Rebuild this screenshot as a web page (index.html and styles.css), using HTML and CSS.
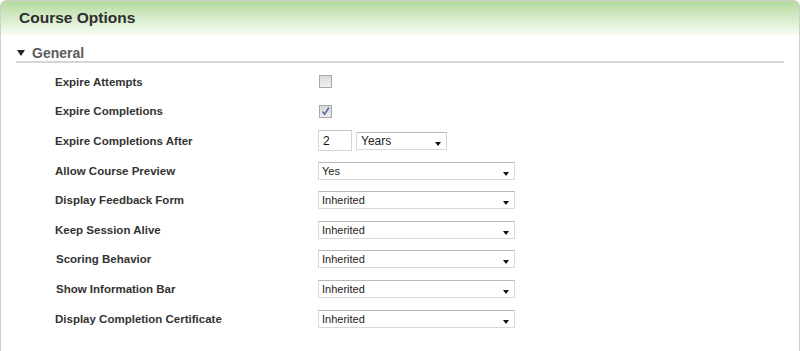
FILE: index.html
```html
<!DOCTYPE html>
<html>
<head>
<meta charset="utf-8">
<link rel="stylesheet" href="styles.css">
</head>
<body>
<div class="panel">
  <div class="panel-header"><h1 class="title">Course Options</h1></div>
  <div class="section">
    <div class="section-head"><span class="caret"></span><span class="section-title">General</span></div>
    <div class="rows">
      <div class="row"><label class="lbl">Expire Attempts</label><div class="ctl"><span class="check"></span></div></div>
      <div class="row"><label class="lbl">Expire Completions</label><div class="ctl"><span class="check on"><svg width="11" height="11" viewBox="0 0 11 11"><path d="M2.5 5.5 L4.6 8.2 L8.8 1.8" fill="none" stroke="#5068a8" stroke-width="1.6"/></svg></span></div></div>
      <div class="row"><label class="lbl">Expire Completions After</label><div class="ctl"><span class="textbox">2</span><span class="select short">Years<span class="arrow"></span></span></div></div>
      <div class="row"><label class="lbl">Allow Course Preview</label><div class="ctl"><span class="select">Yes<span class="arrow"></span></span></div></div>
      <div class="row"><label class="lbl">Display Feedback Form</label><div class="ctl"><span class="select">Inherited<span class="arrow"></span></span></div></div>
      <div class="row"><label class="lbl">Keep Session Alive</label><div class="ctl"><span class="select">Inherited<span class="arrow"></span></span></div></div>
      <div class="row"><label class="lbl shift">Scoring Behavior</label><div class="ctl"><span class="select">Inherited<span class="arrow"></span></span></div></div>
      <div class="row"><label class="lbl shift">Show Information Bar</label><div class="ctl"><span class="select">Inherited<span class="arrow"></span></span></div></div>
      <div class="row"><label class="lbl">Display Completion Certificate</label><div class="ctl"><span class="select">Inherited<span class="arrow"></span></span></div></div>
    </div>
  </div>
</div>
</body>
</html>
```
FILE: styles.css
```css
html, body {
  margin: 0;
  padding: 0;
  background: #ffffff;
}
body {
  font-family: "Liberation Sans", Arial, sans-serif;
  color: #333;
}
.panel {
  width: 800px;
  height: 100vh;
  box-sizing: border-box;
  border: 1px solid #cfcfcf;
  border-bottom: none;
  border-radius: 6px 6px 0 0;
  background: #fff;
  overflow: hidden;
}
.panel-header {
  height: 34px;
  background: linear-gradient(to bottom, #b4da9c 0%, #d4eac6 45%, #f6fbf3 100%);
  display: flex;
  align-items: center;
  padding-left: 18px;
}
.title {
  margin: 0;
  font-size: 15.5px;
  font-weight: bold;
  color: #2e2e2e;
}
.section {
  margin: 0 15px 0 15px;
}
.section-head {
  display: flex;
  align-items: center;
  height: 16px;
  padding-top: 10px;
  padding-bottom: 0;
  border-bottom: 2px solid #d6d6d6;
}
.caret {
  width: 0;
  height: 0;
  border-left: 4px solid transparent;
  border-right: 4px solid transparent;
  border-top: 6px solid #222;
  margin-left: 1px;
  margin-right: 7px;
}
.section-title {
  font-size: 14px;
  font-weight: bold;
  color: #5c5c5c;
}
.rows {
  padding-top: 4px;
}
.row {
  display: flex;
  align-items: center;
  height: 29.6px;
}
.lbl {
  width: 263px;
  padding-left: 39px;
  font-size: 11.5px;
  font-weight: bold;
  color: #333;
}
.lbl.shift {
  padding-left: 40px;
  width: 262px;
}
.ctl {
  display: flex;
  align-items: center;
  gap: 4px;
}
.check {
  width: 11px;
  height: 11px;
  margin-left: 1px;
  border: 1px solid #a9a9a9;
  background: linear-gradient(to bottom, #dcdcdc, #f0f0f0);
  display: flex;
  align-items: center;
  justify-content: center;
}
.check.on {
  background: linear-gradient(to bottom, #d8d8d8, #ececec);
}
.textbox {
  width: 28px;
  height: 19px;
  border: 1px solid #d6d6d6;
  border-top-color: #c4c4c4;
  padding-left: 4px;
  font-size: 12px;
  color: #111;
  display: flex;
  align-items: center;
}
.select {
  position: relative;
  width: 192px;
  height: 16px;
  border: 1px solid #dadada;
  border-top-color: #b9b9b9;
  padding-left: 3px;
  font-size: 11px;
  color: #222;
  display: flex;
  align-items: center;
  background: #fff;
}
.select.short {
  width: 85px;
  font-size: 12px;
  padding-left: 4px;
}
.arrow {
  position: absolute;
  right: 5px;
  top: 9px;
  width: 0;
  height: 0;
  border-left: 3.5px solid transparent;
  border-right: 3.5px solid transparent;
  border-top: 4px solid #111;
}
```
